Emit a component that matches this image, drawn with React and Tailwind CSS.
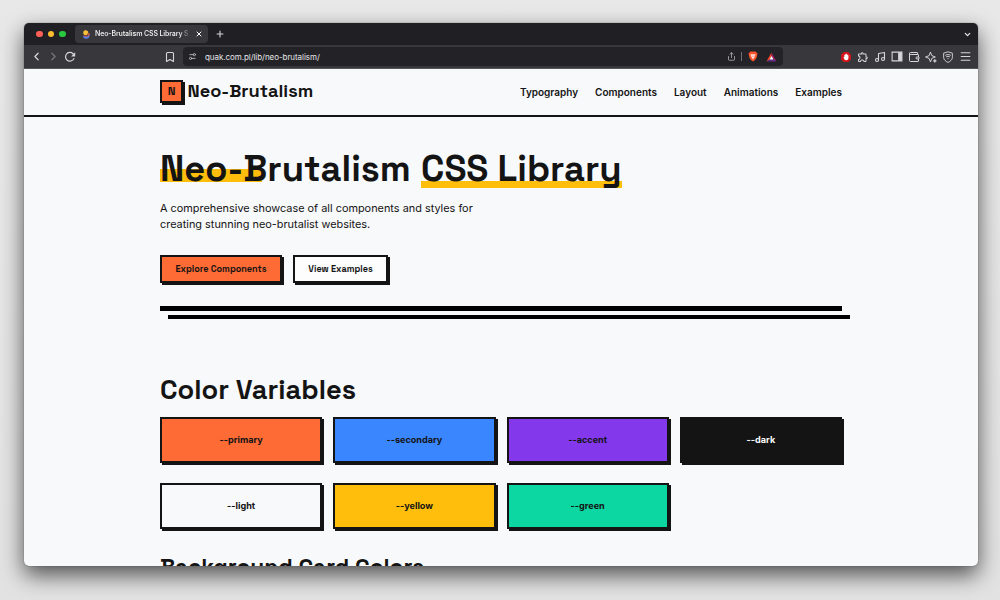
import {
  Bookmark,
  ChevronDown,
  ChevronLeft,
  ChevronRight,
  Menu,
  Music,
  Plus,
  Settings2,
  Share,
  Wallet,
  X,
} from "lucide-react";
import { MdOutlineExtension } from "react-icons/md";

const navLinks = ["Typography", "Components", "Layout", "Animations", "Examples"];

const colors = [
  { name: "--primary", className: "bg-[#ff6b35] text-[#141414]" },
  { name: "--secondary", className: "bg-[#3a86ff] text-[#141414]" },
  { name: "--accent", className: "bg-[#8338ec] text-[#141414]" },
  { name: "--dark", className: "bg-[#141414] text-[#f8f9fb]" },
  { name: "--light", className: "bg-[#f8f9fb] text-[#141414]" },
  { name: "--yellow", className: "bg-[#ffbe0b] text-[#141414]" },
  { name: "--green", className: "bg-[#0cd6a1] text-[#141414]" },
];

const TabBar = () => (
  <div className="flex h-[22px] items-center bg-[#202024] pl-3 pr-[6px]">
    <div className="flex w-[39px] gap-[5px]">
      <span className="size-[6.5px] rounded-full bg-[#ff5f57]"></span>
      <span className="size-[6.5px] rounded-full bg-[#febc2e]"></span>
      <span className="size-[6.5px] rounded-full bg-[#28c840]"></span>
    </div>
    <div className="flex h-[18px] w-[133px] items-center rounded-[4px] bg-[#38383c] pl-[7px] pr-[5px]">
      {/* Favicon */}
      <svg viewBox="0 0 16 16" className="mr-1 size-[9px] shrink-0">
        <path d="M1.500 10c2 2 8 2 12-2 1 5-2 7.500-6 7.500-3 0-6-2-6-5.500z" fill="#5879e8" />
        <path d="M4 1c4-2 8 1 7 4s-3 5-6 4-4-5-1-8z" fill="#f8c33a" />
        <path d="M9 6l6 0-4 4z" fill="#f0643c" />
        <path d="M3 9c2 3 6 3 9 1" stroke="#e0584f" strokeWidth="1.500" fill="none" />
      </svg>
      <span className="whitespace-nowrap bg-linear-to-r from-[#f2f2f4] from-90% to-[#505054] bg-clip-text text-[7px] font-semibold leading-[12px] tracking-[-0.13px] text-transparent">
        Neo-Brutalism CSS Library S
      </span>
      <X className="ml-auto size-[8px] shrink-0 text-white" strokeWidth={3} />
    </div>
    <Plus className="ml-[7px] size-[10px] text-[#d8d8da]" strokeWidth={2.6} />
    <ChevronDown className="ml-auto size-[9px] text-[#e4e4e6]" strokeWidth={3.5} />
  </div>
);

const AddressBar = () => (
  <div className="flex h-[19px] w-[600px] items-center rounded-[4px] bg-[#232327] pl-[5px] pr-[6px]">
    <Settings2 className="size-[9px] -scale-y-100 text-[#c0c0c4]" strokeWidth={2.3} />
    <span className="ml-[8px] text-[8px] leading-none tracking-[-0.06px] text-[#e6e6e8]">
      quak.com.pl/lib/neo-brutalism/
    </span>
    <Share className="ml-auto size-[9px] text-[#bebec2]" strokeWidth={2} />
    <span className="ml-[5px] h-[9px] w-px bg-[#707074]"></span>
    {/* Brave shield */}
    <svg viewBox="0 0 20 22" className="ml-[6px] h-[11px] w-[10px]">
      <path d="M5 1h10l4 4-2 9-3 4-4 3-4-3-3-4-2-9z" fill="#fb542b" />
      <path d="M5 7l3-1 2 1 2-1 3 1-1 4-4 6-4-6z" fill="#fff" opacity=".8" />
      <path d="M7 9l2 1-1 2zM13 9l-2 1 1 2z" fill="#fb542b" />
    </svg>
    {/* Brave rewards triangle */}
    <svg viewBox="0 0 22 20" className="ml-[8px] h-[10px] w-[11px]">
      <path d="M11 1v8l-4 6-6 4z" fill="#ff4724" />
      <path d="M11 1v8l4 6 6 4z" fill="#9e1f63" />
      <path d="M1 19l6-4h8l6 4z" fill="#662d91" />
      <path d="M11 8l4 7H7z" fill="#fff" />
    </svg>
  </div>
);

const Toolbar = () => (
  <div className="flex h-6 items-center border-b border-[#56565a] bg-[#38383c] pl-[6px] pr-[6px] text-[#d6d6da]">
    <ChevronLeft className="size-[13px]" strokeWidth={2.3} />
    <ChevronRight className="ml-[4px] size-[13px] text-[#77777b]" strokeWidth={2.3} />
    <svg viewBox="0 0 22 22" className="ml-[4px] size-[12px]">
      <path
        d="M18.500 13a8 8 0 1 1-2-8l2.500 2.500"
        fill="none"
        stroke="currentColor"
        strokeWidth="2.200"
      />
      <path d="M20.500 2.500v7.500h-7.500z" fill="currentColor" />
    </svg>
    <Bookmark className="ml-[88px] mr-[7px] size-[12px]" strokeWidth={2.2} />
    <AddressBar />
    <div className="ml-auto flex items-center gap-[5px]">
      {/* Ad blocker */}
      <svg viewBox="0 0 22 22" className="size-[12px]">
        <path d="M7 2h8l5 5v8l-5 5H7l-5-5V7z" fill="#d5151c" />
        <path
          d="M6.500 11l1.500-.5V7h1.500V6H11V5h1.500v1.500H14V8h1.500v5c0 3-2 4-4 4-3 0-4-2-5-6z"
          fill="#fff"
        />
      </svg>
      <MdOutlineExtension className="size-[12px]" />
      <Music className="size-[12px]" strokeWidth={2.2} />
      {/* Side panel */}
      <svg viewBox="0 0 22 20" className="h-[11px] w-[12px]">
        <path d="M2 2h18v16H2z" fill="none" stroke="currentColor" strokeWidth="2" />
        <path d="M13 2h7v16h-7z" fill="currentColor" />
      </svg>
      <Wallet className="size-[12px]" strokeWidth={2} />
      <svg viewBox="0 0 22 22" className="size-[12px]" fill="none" stroke="currentColor" strokeWidth="1.800">
        <path d="M10 2l2.500 6.500L19 11l-6.500 2.500L10 20l-2.500-6.500L1 11l6.500-2.500z" />
        <path d="M18 15v6M15 18h6" strokeWidth="2.400" />
      </svg>
      {/* VPN shield */}
      <svg viewBox="0 0 22 22" className="size-[12px]" fill="none" stroke="currentColor" strokeWidth="1.700">
        <path d="M11 1.500l8 2.500v8c0 4-4 7-8 9-4-2-8-5-8-9V4z" />
        <path d="M6 8c3-2 7-2 10 0M7.500 11c2-1.500 5-1.500 7 0M10 14h2" />
      </svg>
      <Menu className="size-[13px]" strokeWidth={2} />
    </div>
  </div>
);

const Header = () => (
  <header className="border-b-2 border-[#141414]">
    <div className="mx-auto flex h-[46px] w-[682px] items-center justify-between">
      <div className="flex items-center gap-[4.5px] pb-px font-['Space_Grotesk','Inter',sans-serif] font-bold">
        <span className="flex size-[23px] items-center justify-center border-2 border-[#141414] bg-[#ff6b35] text-[11.5px] shadow-[2px_2px_0_#141414]">
          N
        </span>
        <span className="whitespace-nowrap text-[18.2px] leading-none">Neo-Brutalism</span>
      </div>
      <nav className="flex gap-[17px] text-[10px] font-semibold">
        {navLinks.map((link) => (
          <a key={link} href="#" className="whitespace-nowrap">
            {link}
          </a>
        ))}
      </nav>
    </div>
  </header>
);

const Hero = () => (
  <section>
    <h1 className="flex gap-[10px] whitespace-nowrap font-['Space_Grotesk','Inter',sans-serif] text-[36.3px] font-bold leading-[44px]">
      <span className="w-[251px] bg-linear-to-r from-[#ffbe0b] to-[#ffbe0b] bg-[length:102px_13px] bg-[position:0_22px] bg-no-repeat">
        Neo-Brutalism
      </span>
      <span className="w-[201px] bg-linear-to-r from-[#ffbe0b] to-[#ffbe0b] bg-[length:100%_7px] bg-[position:0_34px] bg-no-repeat">
        CSS Library
      </span>
    </h1>
    <p className="mt-[9px] w-[340px] text-[10.9px] leading-[16px]">
      A comprehensive showcase of all components and styles for
      <br />
      creating stunning neo-brutalist websites.
    </p>
    <div className="mt-[23px] flex gap-[11px] font-['Space_Grotesk','Inter',sans-serif] text-[9.1px] font-bold">
      <button className="h-[28px] w-[122px] whitespace-nowrap border-2 border-[#141414] bg-[#ff6b35] pt-px shadow-[2px_2px_0_#141414]">
        Explore Components
      </button>
      <button className="h-[28px] w-[95px] whitespace-nowrap border-2 border-[#141414] bg-[#fdfdfe] pt-px shadow-[2px_2px_0_#141414]">
        View Examples
      </button>
    </div>
    <div className="mt-[23px] h-[4.5px] bg-black"></div>
    <div className="ml-[8.4px] mt-[4px] h-[4.5px] w-[682px] bg-black"></div>
  </section>
);

const App = () => {
  return (
    <div className="h-[600px] overflow-hidden bg-linear-to-b from-[#e8e8e8] to-[#e2e2e2] px-[24px] pt-[23px] font-['Inter',sans-serif]">
      <div className="h-[543px] w-[954px] overflow-hidden rounded-[5px] bg-[#f8f9fb] text-[#141414] shadow-[0_0_1px_#333,0_9px_22px_rgba(0,0,0,0.65)]">
        <TabBar />
        <Toolbar />
        <Header />
        <main className="mx-auto w-[682px] pt-[30px]">
          <Hero />
          <h2 className="mt-[54px] whitespace-nowrap font-['Space_Grotesk','Inter',sans-serif] text-[27.3px] font-bold leading-[34px]">
            Color Variables
          </h2>
          <div className="mt-[10px] grid grid-cols-4 gap-x-[11px] gap-y-[19.5px]">
            {colors.map((color) => (
              <div
                key={color.name}
                className={`flex h-[46px] items-center justify-center border-2 border-[#141414] text-[9.1px] font-bold shadow-[2px_2px_0_#141414] ${color.className}`}
              >
                {color.name}
              </div>
            ))}
          </div>
          <h2 className="mt-[24px] whitespace-nowrap font-['Space_Grotesk','Inter',sans-serif] text-[22.7px] font-bold leading-[30px]">
            Background Card Colors
          </h2>
        </main>
      </div>
    </div>
  );
};

export default App;
